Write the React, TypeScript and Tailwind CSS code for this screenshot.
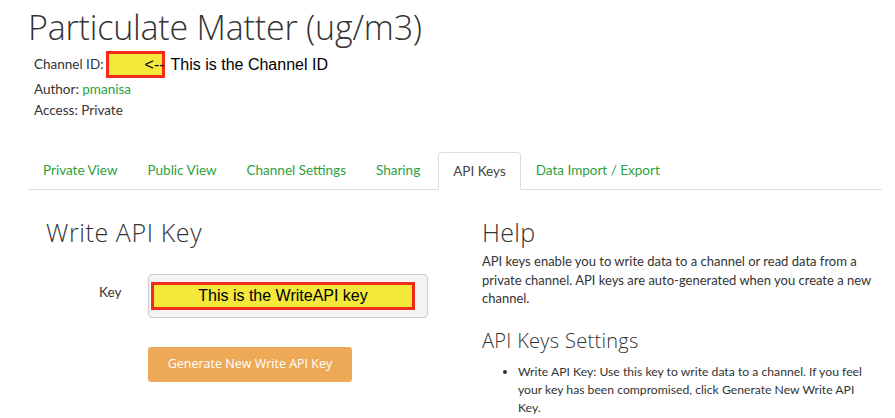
import React from "react";

const body = { fontFamily: "Lato, 'Noto Sans', sans-serif" };

export default function App() {
  const tabs = ["Private View", "Public View", "Channel Settings", "Sharing", "API Keys", "Data Import / Export"];
  return (
    <div className="w-[895px] h-[418px] overflow-hidden bg-white text-[#333]" style={body}>
      <div className="pl-[28px] pr-[13px]">
        <h1 className="pt-[6px] text-[34px] leading-[42px] font-light tracking-[-0.2px] text-[#333] font-['Open_Sans',sans-serif]">
          Particulate Matter (ug/m3)
        </h1>
        <div className="pl-[6px] mt-[3px] text-[13.5px] leading-[21px]">
          <div className="flex items-center h-[27px]">
            <span>Channel ID:</span>
            <span className="ml-[2px] relative w-[59px] h-[27px] bg-[#f4e83a] border-[3px] border-[#f42a1a]">
              <span className="absolute left-[36px] top-[1px] whitespace-nowrap text-[16px] leading-[20px] text-black font-['Liberation_Sans',sans-serif]">&lt;--</span>
            </span>
            <span className="ml-[6px] text-[16px] text-black font-['Liberation_Sans',sans-serif]">This is the Channel ID</span>
          </div>
          <div className="mt-[1px]">
            Author: <span className="text-[#2ba13f]">pmanisa</span>
          </div>
          <div>Access: Private</div>
        </div>

        <div className="mt-[31px] flex border-b border-[#ddd] h-[38px] w-[854px] text-[13.5px]">
          {tabs.map((t) => {
            const active = t === "API Keys";
            return (
              <div
                key={t}
                className={
                  active
                    ? "h-[38px] px-[14px] ml-[3px] flex items-center bg-white border border-[#ddd] border-b-white rounded-t-[4px] text-[#444] mb-[-1px]"
                    : "h-[37px] px-[15px] flex items-center text-[#2ba13f]"
                }
              >
                {t}
              </div>
            );
          })}
        </div>

        <div className="flex mt-[28px]">
          <div className="w-[454px] pl-[18px]">
            <h2 className="text-[25px] leading-[28px] font-light tracking-[0.6px] font-['Open_Sans',sans-serif] text-[#333]">Write API Key</h2>
            <div className="flex items-start mt-[28px]">
              <div className="w-[102px] pl-[53px] pt-[8px] text-[13.5px] text-[#333]">Key</div>
              <div className="w-[280px] h-[44px] bg-[#f4f4f4] border border-[#ccc] rounded-[4px] pt-[7px] pl-[2px]">
                <div className="w-[264px] h-[28px] bg-[#f4e83a] border-[3px] border-[#f42a1a] flex items-center justify-center text-[16px] text-black font-['Liberation_Sans',sans-serif]">
                  This is the WriteAPI key
                </div>
              </div>
            </div>
            <div className="pl-[102px] mt-[29px]">
              <div className="w-[204px] h-[35px] bg-[#eea957] rounded-[3px] flex items-center justify-center text-white text-[12.5px] font-['Open_Sans',sans-serif]">
                Generate New Write API Key
              </div>
            </div>
          </div>
          <div className="w-[400px]">
            <h2 className="text-[25px] leading-[28px] font-light tracking-[0.3px] font-['Open_Sans',sans-serif] text-[#333]">Help</h2>
            <p className="mt-[6px] text-[13px] leading-[18.5px] text-[#333] w-[400px]">
              API keys enable you to write data to a channel or read data from a private channel. API keys are auto-generated when you create a new channel.
            </p>
            <h3 className="mt-[21px] text-[20px] leading-[24px] font-light tracking-[0.3px] font-['Open_Sans',sans-serif] text-[#333]">API Keys Settings</h3>
            <ul className="mt-[10px] pl-[36px] list-disc text-[12.2px] leading-[18px] w-[384px]">
              <li>Write API Key: Use this key to write data to a channel. If you feel your key has been compromised, click Generate New Write API Key.</li>
            </ul>
          </div>
        </div>
      </div>
    </div>
  );
}
